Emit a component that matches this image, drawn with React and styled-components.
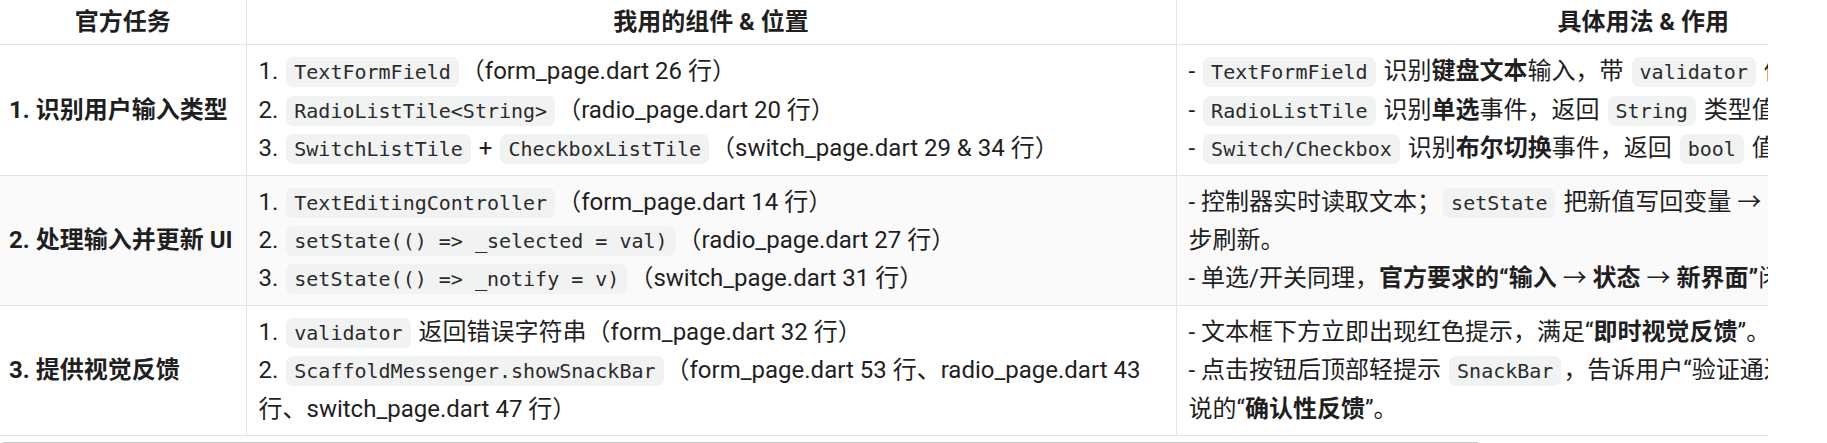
import React from 'react'
import styled, { createGlobalStyle } from 'styled-components'

const GlobalStyle = createGlobalStyle`
  html, body {
    margin: 0;
    padding: 0;
    background: #ffffff;
  }
  body {
    font-family: Roboto, "Noto Sans CJK SC", sans-serif;
    color: #1f1f1f;
  }
`

const Frame = styled.div`
  width: 1768px;
`

const Scroller = styled.div`
  width: 100%;
  overflow: hidden;
`

const ScrollTrack = styled.div`
  height: 12px;
  padding: 6px 0 0 3px;
`

const ScrollThumb = styled.div`
  height: 6px;
  background: #c6c6c6;
  border-radius: 1px;
`

const Table = styled.table`
  width: 2110px;
  table-layout: fixed;
  border-collapse: collapse;
  font-size: 24px;
  line-height: 1.6;
`

const Row = styled.tr`
  background: ${p => (p.$shaded ? '#fafafa' : '#ffffff')};
`

const HeadCell = styled.th`
  padding: 3px 12px;
  font-weight: 700;
  text-align: center;
  border-bottom: 1px solid #e3e3e3;
  border-right: 1px solid #e3e3e3;
  &:last-child {
    border-right: none;
  }
`

const Cell = styled.td`
  padding: 7px 12px;
  vertical-align: middle;
  border-bottom: 1px solid #e3e3e3;
  border-right: 1px solid #e3e3e3;
  font-weight: ${p => (p.$label ? 700 : 400)};
  padding-left: ${p => (p.$label ? '9px' : '12px')};
  &:last-child {
    border-right: none;
  }
`

const Line = styled.div`
  white-space: nowrap;
`

const Arrow = styled.span`
  font-weight: 400;
`

const Code = styled.code`
  font-family: "DejaVu Sans Mono", monospace;
  font-size: 20px;
  color: #2b2b2b;
  background: #f1f2f2;
  border-radius: 7px;
  padding: 3px 8px;
  margin: 0 2px;
`

const columns = [
  { title: '官方任务', width: 246 },
  { title: '我用的组件 & 位置', width: 930 },
  { title: '具体用法 & 作用', width: 934 }
]

const rows = [
  {
    label: '1. 识别用户输入类型',
    shaded: false,
    components: [
      <>1. <Code>TextFormField</Code>（form_page.dart 26 行）</>,
      <>2. <Code>RadioListTile&lt;String&gt;</Code>（radio_page.dart 20 行）</>,
      <>3. <Code>SwitchListTile</Code> + <Code>CheckboxListTile</Code>（switch_page.dart 29 &amp; 34 行）</>
    ],
    usage: [
      <>- <Code>TextFormField</Code> 识别<b>键盘文本</b>输入，带 <Code>validator</Code> 做即时校验。</>,
      <>- <Code>RadioListTile</Code> 识别<b>单选</b>事件，返回 <Code>String</Code> 类型值。</>,
      <>- <Code>Switch/Checkbox</Code> 识别<b>布尔切换</b>事件，返回 <Code>bool</Code> 值。</>
    ]
  },
  {
    label: '2. 处理输入并更新 UI',
    shaded: true,
    components: [
      <>1. <Code>TextEditingController</Code>（form_page.dart 14 行）</>,
      <>2. <Code>{'setState(() => _selected = val)'}</Code>（radio_page.dart 27 行）</>,
      <>3. <Code>{'setState(() => _notify = v)'}</Code>（switch_page.dart 31 行）</>
    ],
    usage: [
      <>- 控制器实时读取文本；<Code>setState</Code> 把新值写回变量 → 触发重建，界面同</>,
      <>步刷新。</>,
      <>
        - 单选/开关同理，<b>官方要求的“输入 <Arrow>→</Arrow> 状态 <Arrow>→</Arrow> 新界面”</b>闭环。
      </>
    ]
  },
  {
    label: '3. 提供视觉反馈',
    shaded: false,
    components: [
      <>1. <Code>validator</Code> 返回错误字符串（form_page.dart 32 行）</>,
      <>2. <Code>ScaffoldMessenger.showSnackBar</Code>（form_page.dart 53 行、radio_page.dart 43</>,
      <>行、switch_page.dart 47 行）</>
    ],
    usage: [
      <>- 文本框下方立即出现红色提示，满足“<b>即时视觉反馈</b>”。</>,
      <>- 点击按钮后顶部轻提示 <Code>SnackBar</Code>，告诉用户“验证通过”，即官方</>,
      <>说的“<b>确认性反馈</b>”。</>
    ]
  }
]

// visible part of the 2110px table inside the 1768px frame
const thumbWidth = Math.round((1768 * 1768) / 2110) - 6

export default function App() {
  return (
    <>
      <GlobalStyle />
      <Frame>
        <Scroller>
          <Table>
            <colgroup>
              {columns.map(col => (
                <col key={col.title} style={{ width: col.width }} />
              ))}
            </colgroup>
            <thead>
              <Row>
                {columns.map(col => (
                  <HeadCell key={col.title}>{col.title}</HeadCell>
                ))}
              </Row>
            </thead>
            <tbody>
              {rows.map(row => (
                <Row key={row.label} $shaded={row.shaded}>
                  <Cell $label>{row.label}</Cell>
                  <Cell>
                    {row.components.map((item, i) => (
                      <Line key={i}>{item}</Line>
                    ))}
                  </Cell>
                  <Cell>
                    {row.usage.map((item, i) => (
                      <Line key={i}>{item}</Line>
                    ))}
                  </Cell>
                </Row>
              ))}
            </tbody>
          </Table>
        </Scroller>
        <ScrollTrack>
          <ScrollThumb style={{ width: thumbWidth }} />
        </ScrollTrack>
      </Frame>
    </>
  )
}
